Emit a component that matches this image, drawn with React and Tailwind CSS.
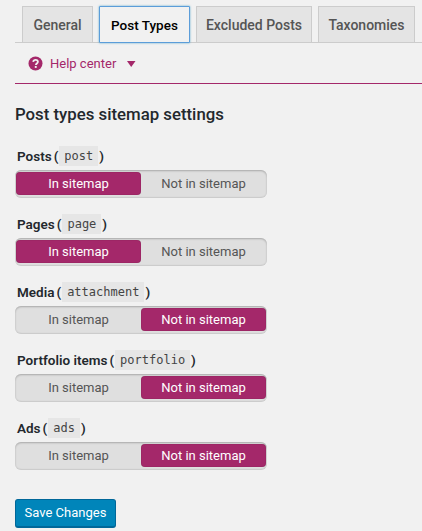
function Toggle({ on }) {
  const active = "flex-1 flex items-center justify-center bg-[#a4286a] text-white rounded-[4px] shadow-[inset_0_0_1px_rgba(0,0,0,0.4)]";
  const idle = "flex-1 flex items-center justify-center text-[#555]";
  return (
    <div className="flex w-[252px] h-[28px] py-[2px] px-[1px] rounded-[6px] bg-[#dfdfdf] shadow-[inset_0_1px_2px_rgba(0,0,0,0.25)] border-b border-[#ccc] text-[13px] leading-none">
      <div className={on ? active : idle}>In sitemap</div>
      <div className={on ? idle : active}>Not in sitemap</div>
    </div>
  );
}
function Row({ label, code, on }) {
  return (
    <div className="h-[68px] pt-[7px]">
      <div className="flex items-center h-[25px] mb-[1px] text-[13.5px] font-semibold text-[#23282d] pl-[2px] whitespace-pre">
        <span className="mr-[2px]">{label}</span>
        <span className="mr-[1px]">(</span>
        <code className="font-['DejaVu_Sans_Mono',monospace] font-normal text-[12px] bg-[#e6e6e6] h-[20px] px-[5px] flex items-center text-[#444]">{code}</code>
        <span className="ml-[1px]">)</span>
      </div>
      <Toggle on={on} />
    </div>
  );
}
function Tab({ children, active, w }) {
  return (
    <div className={active
      ? "h-[37px] pt-[1px] flex items-center justify-center bg-[#f1f1f1] text-[#000] border border-[#5b9dd9] rounded-[1px] shadow-[0_0_2px_rgba(30,140,190,0.8)] -mb-[1px] z-10 text-[13.5px] font-medium " + w
      : "h-[36px] pt-[1px] flex items-center justify-center bg-[#e4e4e4] text-[#555] border border-[#ccc] border-b-0 text-[14px] font-medium " + w}>
      {children}
    </div>
  );
}
export default function App() {
  return (
    <div className="w-[422px] h-[531px] overflow-hidden bg-[#f1f1f1] font-['Roboto','Open_Sans',sans-serif] pl-[15px]">
      <div className="flex items-end gap-[6px] h-[43px] border-b border-[#ccc] pl-[7px]">
        <Tab w="w-[71px]">General</Tab>
        <Tab w="w-[91px]" active>Post Types</Tab>
        <Tab w="w-[116px]">Excluded Posts</Tab>
        <Tab w="w-[97px]">Taxonomies</Tab>
      </div>
      <div className="h-[40px] flex items-center pl-[13px] pt-[1px] text-[#a4286a] text-[13px]">
        <svg width="15" height="15" viewBox="0 0 15 15" className="mr-[7px]">
          <circle cx="7.5" cy="7.5" r="7" fill="#a4286a" />
          <path d="M5.2 5.8c.2-1.3 1.2-2 2.4-2 1.3 0 2.3.8 2.3 2 0 1.7-2 1.7-2 3.1" fill="none" stroke="#f1f1f1" strokeWidth="1.8" />
          <rect x="6.8" y="10" width="1.9" height="1.9" fill="#f1f1f1" />
        </svg>
        <span>Help center</span>
        <svg width="9" height="6" viewBox="0 0 9 6" className="ml-[11px]"><path d="M0 0h8.5L4.2 6z" fill="#a4286a" /></svg>
      </div>
      <div className="h-px bg-[#a4286a]" />
      <h2 className="text-[16.8px] leading-none font-medium text-[#23282d] mt-[22px] mb-[14px]">Post types sitemap settings</h2>
      <Row label="Posts" code="post" on />
      <Row label="Pages" code="page" on />
      <Row label="Media" code="attachment" />
      <Row label="Portfolio items" code="portfolio" />
      <Row label="Ads" code="ads" />
      <button className="mt-[22px] block w-[101px] h-[29px] rounded-[3px] bg-[#0085ba] border border-[#006799] border-b-2 text-white text-[13px]">Save Changes</button>
    </div>
  );
}
